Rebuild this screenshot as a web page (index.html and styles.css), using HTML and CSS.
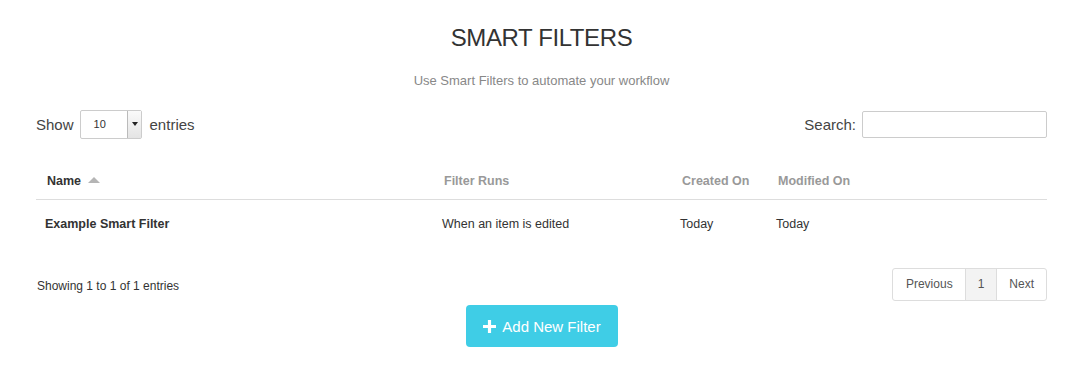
FILE: index.html
```html
<!DOCTYPE html>
<html lang="en">
<head>
  <meta charset="UTF-8">
  <title>Smart Filters</title>
  <link rel="stylesheet" href="styles.css">
</head>
<body>
  <div class="page">
    <h1 class="title">SMART FILTERS</h1>
    <p class="subtitle">Use Smart Filters to automate your workflow</p>

    <!-- верхняя панель таблицы -->
    <div class="table-top">
      <label class="length">Show
        <span class="select"><span class="select-value">10</span><span class="select-arrow"></span></span>
        entries</label>
      <label class="search">Search: <input type="text" class="search-input"></label>
    </div>

    <table class="filters">
      <thead>
        <tr>
          <th class="col-name sorted">Name <span class="sort-up"></span></th>
          <th class="col-runs">Filter Runs</th>
          <th class="col-created">Created On</th>
          <th class="col-modified">Modified On</th>
        </tr>
      </thead>
      <tbody>
        <tr>
          <td class="name">Example Smart Filter</td>
          <td>When an item is edited</td>
          <td>Today</td>
          <td>Today</td>
        </tr>
      </tbody>
    </table>

    <div class="table-bottom">
      <div class="info">Showing 1 to 1 of 1 entries</div>
      <div class="pagination">
        <span class="page-btn">Previous</span>
        <span class="page-btn current">1</span>
        <span class="page-btn">Next</span>
      </div>
    </div>

    <div class="actions">
      <button class="add-btn">
        <svg class="plus" viewBox="0 0 14 14" width="13" height="13"><path d="M5.3 0h3.4v5.3H14v3.4H8.7V14H5.3V8.7H0V5.3h5.3z" fill="#fff"/></svg>
        Add New Filter
      </button>
    </div>
  </div>
</body>
</html>
```

FILE: styles.css
```css
body {
  margin: 0;
  background: #fff;
  font-family: "Liberation Sans", Arial, sans-serif;
  color: #333;
}

.page {
  padding: 0 33px 0 36px;
}

.title {
  margin: 0;
  padding-top: 23px;
  font-size: 24px;
  font-weight: normal;
  letter-spacing: -0.4px;
  line-height: 30px;
  text-align: center;
  color: #333;
}

.subtitle {
  margin: 20px 0 0;
  font-size: 13px;
  line-height: 16px;
  text-align: center;
  color: #888;
}

/* Show / Search */
.table-top {
  display: flex;
  justify-content: space-between;
  align-items: center;
  margin-top: 21px;
  height: 28px;
  font-size: 15px;
  color: #444;
}

.length {
  display: flex;
  align-items: center;
  gap: 6px;
}

.select {
  display: inline-flex;
  align-items: stretch;
  width: 60px;
  height: 27px;
  border: 1px solid #ccc;
  border-radius: 2px;
  margin-right: 2px;
  background: #fff;
}

.select-value {
  flex: 1;
  font-size: 11px;
  line-height: 27px;
  padding-left: 13px;
  color: #333;
}

.select-arrow {
  width: 13px;
  border-left: 1px solid #bbb;
  background: linear-gradient(#fafafa, #e4e4e4);
  position: relative;
}

.select-arrow::after {
  content: "";
  position: absolute;
  left: 4px;
  top: 11px;
  border-left: 3px solid transparent;
  border-right: 3px solid transparent;
  border-top: 4px solid #222;
}

.search {
  display: flex;
  align-items: center;
  gap: 6px;
}

.search-input {
  width: 179px;
  height: 25px;
  margin: 0;
  padding: 0 2px;
  border: 1px solid #ccc;
  border-radius: 2px;
}

/* Таблица */
.filters {
  width: 100%;
  margin-top: 25px;
  border-collapse: collapse;
  font-size: 12.5px;
}

.filters th {
  text-align: left;
  font-weight: bold;
  color: #999;
  padding: 10px 10px 10px;
  line-height: 16px;
  border-bottom: 1px solid #ddd;
}

.filters th.sorted {
  color: #333;
  padding-left: 11px;
}

.col-name { width: 377px; }
.col-runs { width: 218px; }
.col-created { width: 76px; }

.sort-up {
  display: inline-block;
  margin-left: 3px;
  vertical-align: 2px;
  border-left: 6px solid transparent;
  border-right: 6px solid transparent;
  border-bottom: 6px solid #b5b5b5;
}

.filters td {
  padding: 16px 8px 13px;
  line-height: 16px;
  color: #333;
}

.filters td.name {
  font-weight: bold;
  padding-left: 9px;
}

/* Низ таблицы */
.table-bottom {
  display: flex;
  justify-content: space-between;
  align-items: center;
  margin-top: 23px;
}

.info {
  font-size: 12px;
  padding-top: 3px;
  padding-left: 1px;
}

.pagination {
  display: flex;
  border: 1px solid #ddd;
  border-radius: 3px;
  font-size: 12px;
  color: #555;
}

.page-btn {
  display: block;
  padding: 0 12px;
  line-height: 31px;
}

.page-btn:first-child {
  padding-left: 13px;
}

.page-btn + .page-btn {
  border-left: 1px solid #ddd;
}

.page-btn.current {
  background: #f3f3f3;
  padding: 0 12px;
}

.actions {
  display: flex;
  justify-content: center;
  margin-top: 4px;
}

.add-btn {
  display: flex;
  align-items: center;
  gap: 6px;
  width: 152px;
  height: 42px;
  justify-content: center;
  border: none;
  border-radius: 4px;
  background: #3fcde6;
  color: #fff;
  font-family: "Liberation Sans", Arial, sans-serif;
  font-size: 15px;
  margin-left: 1px;
}
```
